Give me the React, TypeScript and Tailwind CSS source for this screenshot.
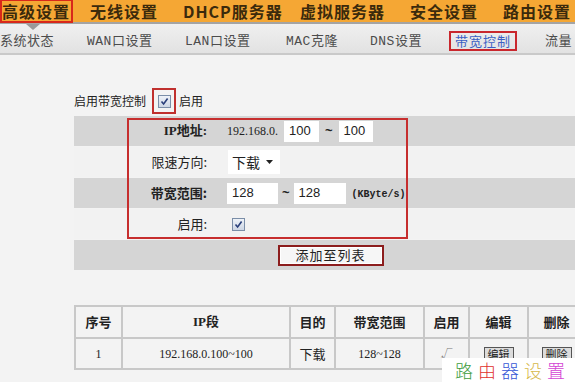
import React from 'react';

// Router admin page: bandwidth control settings.

const topNav = [
  { label: '高级设置', w: 'w-[90px]', active: true },
  { label: '无线设置', w: 'w-[93px]' },
  { label: 'DHCP服务器', w: 'w-[117px]' },
  { label: '虚拟服务器', w: 'w-[110px]' },
  { label: '安全设置', w: 'w-[93px]' },
  { label: '路由设置', w: 'w-[80px]' },
];

const subNav = [
  { label: '系统状态', w: 'w-[87px]' },
  { label: 'WAN口设置', w: 'w-[98px]' },
  { label: 'LAN口设置', w: 'w-[101px]' },
  { label: 'MAC克隆', w: 'w-[84px]' },
  { label: 'DNS设置', w: 'w-[79px]' },
  { label: '带宽控制', w: 'w-[96px]', active: true },
  { label: '流量', w: 'w-[40px]' },
];

function Check({ className = '' }: { className?: string }) {
  return (
    <span
      className={`inline-flex h-[13px] w-[13px] items-center justify-center border border-[#7b8ea8] bg-gradient-to-b from-[#eef2f8] to-[#cdd6e4] ${className}`}
    >
      <svg width="9" height="9" viewBox="0 0 9 9">
        <path d="M1.5 4.5 L3.6 7 L7.6 1.5" fill="none" stroke="#2a3f7a" strokeWidth="1.6" />
      </svg>
    </span>
  );
}

function Field({ value, w }: { value: string; w: string }) {
  return (
    <span className={`flex h-[21px] ${w} items-center bg-white pl-[5px] font-['Liberation_Sans',sans-serif] text-[13px] text-[#222]`}>
      {value}
    </span>
  );
}

export default function App() {
  const cjk = "font-['Noto_Sans_CJK_SC',sans-serif]";
  const mixed = "font-['Liberation_Serif','Noto_Sans_CJK_SC',serif]";

  return (
    <div className={`relative h-[382px] w-[575px] overflow-hidden bg-[#f3f3f3] ${cjk}`}>
      {/* top menu */}
      <nav className="flex h-[22px] items-center bg-[#f5a734]">
        {topNav.map((item) => (
          <div key={item.label} className={`${item.w} shrink-0`}>
            <span
              className={`inline-block whitespace-nowrap text-[16px] font-bold leading-[20px] tracking-[1px] text-[#3b2a0c] ${
                item.active ? '-mt-[2px] border-2 border-[#d8281b] pr-[1px]' : ''
              }`}
            >
              {item.label}
            </span>
          </div>
        ))}
      </nav>
      <div className="h-[2px] bg-[#a4a4a4]" />

      {/* sub menu */}
      <div className="relative flex h-[31px] items-center border-b-2 border-[#c9c9c9] bg-gradient-to-b from-[#f0f0f0] to-[#e2e2e2]">
        <span className="absolute left-[26px] top-0 h-0 w-0 border-x-[7px] border-t-[6px] border-x-transparent border-t-[#9a9a9a]" />
        {subNav.map((item) => (
          <div key={item.label} className={`${item.w} shrink-0`}>
            {item.active ? (
              <span className="inline-block border-2 border-[#c9272d] px-[4px] text-[13px] leading-[16px] tracking-[1px] text-[#3c5fc4]">
                {item.label}
              </span>
            ) : (
              <span className="whitespace-nowrap font-['Liberation_Mono','Noto_Sans_CJK_SC',monospace] text-[13px] tracking-[0.5px] text-[#4c4c4c]">
                {item.label}
              </span>
            )}
          </div>
        ))}
      </div>

      <main className="pl-[74px] pt-[33px]">
        {/* enable toggle */}
        <div className="flex h-[26px] items-center text-[12px] text-[#222]">
          <span>启用带宽控制</span>
          <span className="ml-[6px] flex h-[26px] w-[24px] items-center justify-center border-2 border-[#c0302e]">
            <Check />
          </span>
          <span className="ml-[3px]">启用</span>
        </div>

        {/* rule form */}
        <div className="relative mt-[2px] flex flex-col gap-[1px] text-[13px] text-[#222]">
          <div className="flex h-[30px] items-center bg-[#d5d5d5]">
            <span className={`w-[133px] text-right ${mixed} font-bold`}>IP地址:</span>
            <span className={`ml-[20px] ${mixed} text-[12px]`}>192.168.0.</span>
            <span className="ml-[6px]">
              <Field value="100" w="w-[35px]" />
            </span>
            <span className="mx-[6px] font-['Liberation_Sans',sans-serif] font-bold">~</span>
            <Field value="100" w="w-[34px]" />
          </div>

          <div className="flex h-[30px] items-center bg-[#f2f2f2]">
            <span className="w-[133px] text-right">限速方向:</span>
            <span className="ml-[21px] flex h-[24px] w-[52px] items-center bg-white pl-[4px] text-[14px]">
              下载
              <svg className="ml-[6px]" width="7" height="4" viewBox="0 0 7 4">
                <path d="M0 0 H7 L3.5 4 Z" fill="#222" />
              </svg>
            </span>
          </div>

          <div className="flex h-[30px] items-center bg-[#d5d5d5]">
            <span className="w-[133px] text-right font-bold">带宽范围:</span>
            <span className="ml-[20px]">
              <Field value="128" w="w-[51px]" />
            </span>
            <span className="mx-[4px] font-['Liberation_Sans',sans-serif] font-bold">~</span>
            <Field value="128" w="w-[52px]" />
            <span className="ml-[6px] mt-[3px] font-['Liberation_Mono',monospace] text-[10px] font-bold">(KByte/s)</span>
          </div>

          <div className="flex h-[30px] items-center bg-[#f2f2f2]">
            <span className="w-[133px] text-right">启用:</span>
            <Check className="ml-[25px]" />
          </div>

          <div className="flex h-[30px] items-center justify-center bg-[#d5d5d5] pl-[12px]">
            <button className="flex h-[21px] w-[106px] items-center justify-center border-2 border-[#8c1d1d] bg-[#f6f6f6] text-[13px] tracking-[1px] text-[#222] shadow-[inset_0_0_0_1px_#ffffff]">
              添加至列表
            </button>
          </div>

          {/* annotation frame */}
          <div className="pointer-events-none absolute left-[53px] top-[2px] h-[121px] w-[281px] border-2 border-[#c62e2e]" />
        </div>

        {/* rule list */}
        <table className="mt-[35px] w-[510px] table-fixed border-collapse text-center text-[13px] text-[#222]">
          <colgroup>
            <col className="w-[47px]" />
            <col className="w-[168px]" />
            <col className="w-[45px]" />
            <col className="w-[89px]" />
            <col className="w-[45px]" />
            <col className="w-[59px]" />
            <col className="w-[57px]" />
          </colgroup>
          <thead>
            <tr className="h-[32px] bg-[#f3f3f3] font-bold">
              {['序号', 'IP段', '目的', '带宽范围', '启用', '编辑', '删除'].map((h) => (
                <th key={h} className={`border-2 border-[#c8c8c8] ${h === 'IP段' ? mixed : ''}`}>
                  {h}
                </th>
              ))}
            </tr>
          </thead>
          <tbody>
            <tr className="h-[31px] bg-[#f3f3f3]">
              <td className={`border-2 border-[#c8c8c8] ${mixed} text-[12px]`}>1</td>
              <td className={`border-2 border-[#c8c8c8] ${mixed} text-[12px]`}>192.168.0.100~100</td>
              <td className="border-2 border-[#c8c8c8]">下载</td>
              <td className={`border-2 border-[#c8c8c8] ${mixed} text-[12px]`}>128~128</td>
              <td className="border-2 border-[#c8c8c8] text-[12px] text-[#777]">√</td>
              <td className="border-2 border-[#c8c8c8]">
                <span className="inline-block border border-[#555] bg-[#dcdcdc] px-[3px] text-[11px] leading-[13px]">编辑</span>
              </td>
              <td className="border-2 border-[#c8c8c8]">
                <span className="inline-block border border-[#555] bg-[#dcdcdc] px-[3px] text-[11px] leading-[13px]">删除</span>
              </td>
            </tr>
          </tbody>
        </table>
      </main>

      {/* watermark */}
      <div className="absolute left-[442px] top-[358px] flex h-[24px] w-[133px] items-center gap-[5px] bg-white pl-[13px] text-[18px] font-light leading-none">
        <span className="text-[#3d9c3d]">路</span>
        <span className="text-[#e0302c]">由</span>
        <span className="text-[#3657d6]">器</span>
        <span className="text-[#d6b84a]">设</span>
        <span className="text-[#d443d4]">置</span>
      </div>
    </div>
  );
}
